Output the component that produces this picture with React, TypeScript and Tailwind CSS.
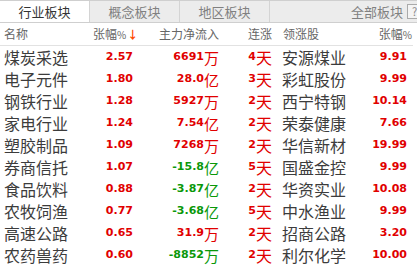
import React from "react";

type Row = {
  name: string;
  pct: string;
  flow: string;
  unit: string;
  days: string;
  leader: string;
  leaderPct: string;
};

const rows: Row[] = [
  { name: "煤炭采选", pct: "2.57", flow: "6691", unit: "万", days: "4", leader: "安源煤业", leaderPct: "9.91" },
  { name: "电子元件", pct: "1.80", flow: "28.0", unit: "亿", days: "3", leader: "彩虹股份", leaderPct: "9.99" },
  { name: "钢铁行业", pct: "1.28", flow: "5927", unit: "万", days: "2", leader: "西宁特钢", leaderPct: "10.14" },
  { name: "家电行业", pct: "1.24", flow: "7.54", unit: "亿", days: "2", leader: "荣泰健康", leaderPct: "7.66" },
  { name: "塑胶制品", pct: "1.09", flow: "7268", unit: "万", days: "2", leader: "华信新材", leaderPct: "19.99" },
  { name: "券商信托", pct: "1.07", flow: "-15.8", unit: "亿", days: "5", leader: "国盛金控", leaderPct: "9.99" },
  { name: "食品饮料", pct: "0.88", flow: "-3.87", unit: "亿", days: "2", leader: "华资实业", leaderPct: "10.08" },
  { name: "农牧饲渔", pct: "0.77", flow: "-3.68", unit: "亿", days: "5", leader: "中水渔业", leaderPct: "9.99" },
  { name: "高速公路", pct: "0.65", flow: "31.9", unit: "万", days: "2", leader: "招商公路", leaderPct: "3.20" },
  { name: "农药兽药", pct: "0.60", flow: "-8852", unit: "万", days: "2", leader: "利尔化学", leaderPct: "10.00" },
];

const cjk = "font-['Noto_Sans_CJK_SC',sans-serif]";
const num = "font-['DejaVu_Sans',sans-serif] font-bold text-[11px]";

export default function App() {
  return (
    <div className="w-[417px] h-[268px] bg-white overflow-hidden">
      {/* tabs */}
      <div className={`flex h-[23px] border-y border-[#cfcfcf] bg-[#ececec] text-[13px] ${cjk}`}>
        <div className="w-[90px] flex items-center justify-center bg-white text-[#333] border-r border-[#d4d4d4]">
          行业板块
        </div>
        <div className="w-[90px] flex items-center justify-center text-[#808080] border-r border-[#d4d4d4]">
          概念板块
        </div>
        <div className="w-[90px] flex items-center justify-center text-[#808080] border-r border-[#d4d4d4]">
          地区板块
        </div>
        <div className="flex-1 flex items-center justify-end text-[#808080]">
          <span>全部板块</span>
          <span className="ml-[4px] -mr-[5px] w-[15px] h-[15px] border border-[#aaa] bg-[#f4f4f4] flex items-center justify-center text-[11px] text-[#888] leading-none">
            ?
          </span>
        </div>
      </div>

      {/* header */}
      <div
        className={`grid grid-cols-[90px_43px_86px_53px_1fr] h-[23px] items-center border-b border-[#e2e2e2] mr-[4px] text-[12px] text-[#666] whitespace-nowrap ${cjk}`}
      >
        <div className="pl-[4px]">名称</div>
        <div className="flex items-center pl-[3px] whitespace-nowrap">
          <span>张幅</span>
          <span className="text-[10px]">%</span>
          <span className="text-[#ff4a00] text-[11px] font-bold ml-[1px]">↓</span>
        </div>
        <div className="text-right">主力净流入</div>
        <div className="text-right">连涨</div>
        <div className="flex justify-between pl-[11px] pr-[1px]">
          <span>领涨股</span>
          <span>
            张幅<span className="text-[10px]">%</span>
          </span>
        </div>
      </div>

      {/* rows */}
      <div>
        {rows.map((r) => {
          const neg = r.flow.startsWith("-");
          const flowColor = neg ? "text-[#0a980a]" : "text-[#e10000]";
          return (
            <div key={r.name} className="grid grid-cols-[90px_43px_86px_53px_1fr] h-[22px] items-center">
              <div className={`pl-[4px] text-[16px] text-[#3c3c3c] leading-none ${cjk}`}>{r.name}</div>
              <div className={`text-right text-[#e10000] ${num}`}>{r.pct}</div>
              <div className={`flex items-center justify-end ${flowColor}`}>
                <span className={num}>{r.flow}</span>
                <span className={`text-[15px] leading-none ${cjk}`}>{r.unit}</span>
              </div>
              <div className="flex items-center justify-end text-[#e10000]">
                <span className={num}>{r.days}</span>
                <span className={`text-[16px] leading-none ${cjk}`}>天</span>
              </div>
              <div className="flex items-center justify-between pl-[10px] pr-[10px]">
                <span className={`text-[16px] text-[#3c3c3c] leading-none ${cjk}`}>{r.leader}</span>
                <span className={`text-[#e10000] ${num}`}>{r.leaderPct}</span>
              </div>
            </div>
          );
        })}
      </div>
    </div>
  );
}
